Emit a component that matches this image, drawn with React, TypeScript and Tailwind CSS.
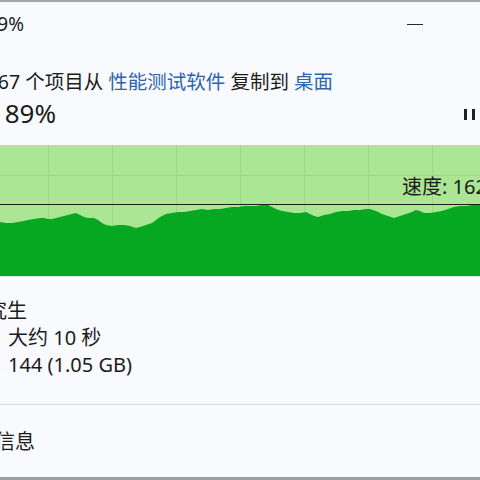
import React from 'react';

// top edge of the transfer rate area (y in a 480x130 box), sampled left to right
const RATE: [number, number][] = [
  [0, 76], [6, 77], [12, 77], [18, 76], [24, 75], [28, 74], [34, 73], [40, 72], [44, 72],
  [48, 73], [52, 73], [56, 72], [60, 71], [64, 70], [68, 69], [72, 68], [76, 67], [80, 69],
  [84, 71], [88, 72], [94, 72], [98, 74], [102, 77], [106, 79], [112, 80], [118, 79],
  [124, 79], [130, 80], [136, 82], [140, 81], [146, 79], [152, 77], [156, 74], [160, 71],
  [166, 68], [172, 67], [178, 66], [184, 66], [190, 65], [196, 64], [202, 63], [208, 64],
  [214, 63], [220, 63], [226, 62], [232, 61], [238, 61], [244, 60], [250, 60], [256, 60],
  [262, 59], [266, 58], [270, 60], [276, 63], [282, 65], [288, 66], [294, 67], [300, 67],
  [306, 66], [310, 68], [314, 70], [318, 71], [324, 69], [330, 68], [336, 66], [342, 65],
  [348, 65], [354, 64], [360, 64], [366, 63], [370, 63], [376, 65], [382, 68], [388, 70],
  [394, 72], [400, 70], [406, 68], [412, 66], [416, 64], [420, 65], [424, 67], [430, 67],
  [436, 66], [442, 65], [448, 63], [454, 61], [460, 60], [466, 60], [472, 59], [480, 59],
];

const GRID_X = [48, 112, 176, 240, 304, 368, 432];

function RateChart() {
  const area = `0,130 ${RATE.map(([x, y]) => `${x},${y}`).join(' ')} 480,130`;
  return (
    <div className="relative h-[132px] border-y border-t-[#c6cbc6] border-b-[#dfe8de] bg-[#aae694]">
      <svg className="block h-[130px] w-[480px]" viewBox="0 0 480 130" preserveAspectRatio="none">
        {GRID_X.map((x) => (
          <line key={x} x1={x + 0.5} y1={0} x2={x + 0.5} y2={130} stroke="#99d884" strokeWidth={1} />
        ))}
        <line x1={0} y1={29.5} x2={480} y2={29.5} stroke="#99d884" strokeWidth={1} />
        <polygon points={area} fill="#05a820" />
        <line x1={0} y1={58.5} x2={480} y2={58.5} stroke="#1e1e1e" strokeWidth={1} />
      </svg>
      {/* speed label sits on the chart */}
      <div className="absolute left-[402px] top-[27px] whitespace-nowrap text-[20px] leading-[28px] text-[#1b1b1b]">
        速度: 162 MB/秒
      </div>
    </div>
  );
}

// text whose start runs off the left edge of the crop
function Clipped({ w, className, children }: { w: string; className?: string; children: React.ReactNode }) {
  return (
    <div className={`flex justify-end whitespace-nowrap ${w} ${className ?? ''}`}>
      <span>{children}</span>
    </div>
  );
}

export default function App() {
  return (
    <div className="flex h-[480px] w-[480px] flex-col overflow-hidden bg-[#f9fafd] font-['Noto_Sans','Noto_Sans_CJK_SC',sans-serif] text-[#1b1b1b]">
      <div className="h-[2px] shrink-0 bg-[#a7a7a7]" />

      {/* title bar */}
      <div className="flex h-[44px] shrink-0 items-center">
        <Clipped w="w-[24px]" className="text-[19px] leading-[44px]">已完成 89%</Clipped>
        <div className="ml-[383px] h-px w-[16px] bg-[#2a2a2a]" />
      </div>

      <div className="mt-[22px] h-[28px] shrink-0">
        <Clipped w="w-[333px]" className="text-[19.5px] leading-[28px]">
          正在将 1,567 个项目从 <span className="text-[#2f63ad]">性能测试软件</span> 复制到{' '}
          <span className="text-[#2f63ad]">桌面</span>
        </Clipped>
      </div>

      <div className="flex h-[34px] shrink-0 items-center">
        <Clipped w="w-[56px]" className="text-[26px] leading-[34px]">已完成 89%</Clipped>
        <div className="ml-[408px] mt-[2px] flex gap-[5px]">
          <div className="h-[11px] w-[3px] bg-[#1f1f1f]" />
          <div className="h-[11px] w-[3px] bg-[#1f1f1f]" />
        </div>
      </div>

      <div className="mt-[15px] shrink-0">
        <RateChart />
      </div>

      {/* details */}
      <div className="mt-[20px] flex shrink-0 flex-col text-[20px] leading-[27px]">
        <Clipped w="w-[27px]">名称: 研究生</Clipped>
        <div className="flex whitespace-nowrap">
          <span className="-ml-[92px] w-[100px] shrink-0">剩余时间:</span>
          <span>大约 10 秒</span>
        </div>
        <div className="flex whitespace-nowrap">
          <span className="-ml-[92px] w-[100px] shrink-0">剩余项目:</span>
          <span>144 (1.05 GB)</span>
        </div>
      </div>

      <div className="mt-[26px] h-px shrink-0 bg-[#dadcdf]" />

      <div className="mt-[23px] h-[28px] shrink-0">
        <Clipped w="w-[35px]" className="text-[20px] leading-[28px]">简略信息</Clipped>
      </div>

      <div className="mt-[21px] h-[3px] shrink-0 bg-[#9d9d9d]" />
    </div>
  );
}
